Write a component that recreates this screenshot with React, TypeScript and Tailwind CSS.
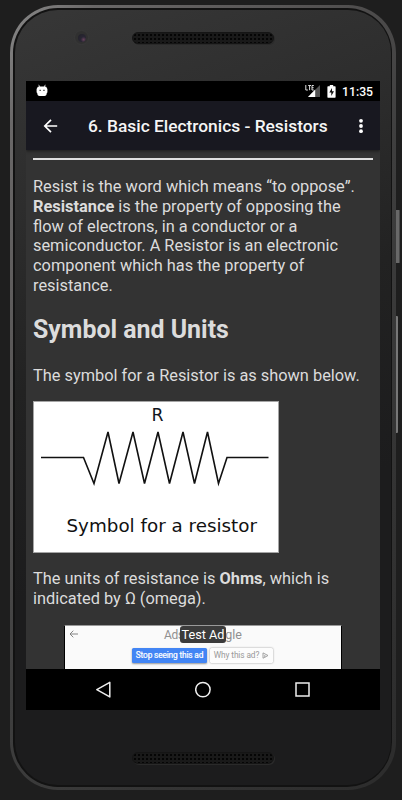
import React from 'react';

function Speaker() {
  return (
    <div className="w-[142px] h-[12px] rounded-full bg-[#191919] border border-[#151515] shadow-[1px_1px_0_#2a2a2a] bg-[radial-gradient(circle,#050505_1px,transparent_1.5px)] bg-[length:4px_4px]" />
  );
}

function StatusBar() {
  return (
    <div className="h-[20px] bg-black flex items-center pl-[10px] pr-[7px]">
      <svg width="12" height="13" viewBox="0 0 12 13" className="-mt-[1px]">
        <path d="M2.7 .8 3.8 3M9.3 .8 8.2 3" stroke="#bbb" strokeWidth="1" />
        <path d="M1.4 3.5Q1.5 2.4 3 2.4H9Q10.5 2.4 10.6 3.5L11.4 5V8.5L10.7 9V10Q10.4 12 8.5 12H3.5Q1.6 12 1.3 10V9L.6 8.5V5Z" fill="#fff" />
        <path d="M3.5 5.8h1.3v1.2H3.5zM7.3 5.8h1.3v1.2H7.3z" fill="#333" />
      </svg>
      <div className="ml-auto flex items-center">
        <svg width="16" height="14" viewBox="0 0 16 14">
          <path d="M15 1V13H3Z" fill="#545454" />
          <path d="M10.2 5.5V13H3Z" fill="#fff" />
          <path d="M.8 1V6H2.9M3.2 1.5H6M4.6 1.5V6.2M8.8 1.5H7V6H8.8M7 3.7H8.6" fill="none" stroke="#ddd" strokeWidth="1" />
        </svg>
        <svg width="9" height="13" viewBox="0 0 9 13" className="ml-[6px]">
          <path d="M2.8 0H6.2V1.2H8Q8.6 1.2 8.6 2V12Q8.6 12.8 8 12.8H1Q.4 12.8 .4 12V2Q.4 1.2 1 1.2H2.8Z" fill="#fff" />
          <path d="M5 3 2.3 7.5H4.3V11L7 6.2H5Z" fill="#111" />
        </svg>
        <span className="ml-[6px] pt-[1px] text-[12.2px] leading-[20px] font-medium text-white">11:35</span>
      </div>
    </div>
  );
}

function AppBar() {
  return (
    <header className="relative z-10 h-[49px] bg-[#181820] shadow-[0_1px_3px_rgba(0,0,0,0.5)] flex items-center pl-[17px] pr-[16px]">
      <svg width="16" height="16" viewBox="0 0 16 16" fill="none" stroke="#fff" strokeWidth="1.7">
        <path d="M14.2 8H2M8 1.8 1.8 8 8 14.2" />
      </svg>
      <h1 className="ml-[29px] pt-[1px] text-[17.35px] leading-[24px] font-medium text-[#f5f5f5] whitespace-nowrap">6. Basic Electronics - Resistors</h1>
      <svg width="6" height="18" viewBox="0 0 6 18" fill="#fff" className="ml-auto">
        <circle cx="3" cy="3.8" r="1.9" />
        <circle cx="3" cy="9" r="1.9" />
        <circle cx="3" cy="14.2" r="1.9" />
      </svg>
    </header>
  );
}

function ResistorFigure() {
  return (
    <svg width="246" height="152" viewBox="0 0 246 152" className="block mt-[15px]">
      <rect x=".5" y=".5" width="245" height="151" fill="#fff" stroke="#a5a5a5" />
      <path
        d="M8 56.5H50.5L61 82.5 75 31 86 82.5 100 31 111.5 82.5 125 31 136.5 82.5 150 31 161.5 82.5 174.5 31 185.5 82.5 194 56.5H235.5"
        fill="none"
        stroke="#111"
        strokeWidth="1.6"
      />
      <text x="118.5" y="20" fontSize="18" textLength="12" lengthAdjust="spacingAndGlyphs" fill="#101520" fontFamily="'DejaVu Sans', sans-serif">R</text>
      <text x="33.5" y="131" fontSize="18" textLength="190.5" lengthAdjust="spacingAndGlyphs" fill="#111" fontFamily="'DejaVu Sans', sans-serif">Symbol for a resistor</text>
    </svg>
  );
}

function AdBanner() {
  return (
    <div className="relative mt-[16px] ml-[31px] w-[278px] h-[50px] bg-[#fafafa] border border-black border-t-[#999]">
      <svg width="10" height="8" viewBox="0 0 10 8" fill="none" stroke="#777" strokeWidth=".9" className="absolute left-[4px] top-[4px]">
        <path d="M9 4H1M4.3 .7 1 4 4.3 7.3" />
      </svg>
      <div className="flex justify-center text-[12px] leading-[18px] text-[#909090]">
        <span className="w-[78px] flex justify-between">
          <span className="-tracking-[.3px]">Ads</span>
          <span className="text-[12.5px]">gle</span>
        </span>
      </div>
      <span className="absolute left-[115px] top-0 w-[46px] h-[17px] rounded-[3px] bg-[#3b3b3b] text-center text-[12.7px] leading-[18px] text-white whitespace-nowrap">Test Ad</span>
      <div className="flex gap-[3px] ml-[67px] mt-[4px] text-[8.3px] leading-[15px] whitespace-nowrap">
        <span className="w-[75px] h-[15px] rounded-[1.5px] bg-[#4285f4] flex items-center justify-center tracking-[-0.15px] text-white [-webkit-text-stroke:0.2px_white] shadow-[0_1px_2px_rgba(0,0,0,0.4)]">Stop seeing this ad</span>
        <span className="w-[63px] h-[15px] rounded-[1.5px] bg-[#fcfcfc] flex items-center justify-center gap-[3px] tracking-[-0.1px] text-[#999] shadow-[0_0_2px_rgba(0,0,0,0.45)]">
          Why this ad?
          <svg width="7" height="7" viewBox="0 0 7 7" fill="none" stroke="#999" strokeWidth=".9">
            <path d="M1 4.8V.9L6 3.5 2.8 5.3V3M1 4.8V6.2L2.8 5.3" />
          </svg>
        </span>
      </div>
    </div>
  );
}

function NavBar() {
  return (
    <div className="h-[41px] shrink-0 bg-black flex items-center pl-[69px]">
      <svg width="18" height="18" viewBox="0 0 18 18" fill="none" stroke="#eee" strokeWidth="1.5" strokeLinejoin="round">
        <path d="M14.8 1.3V15.9L1.8 8.6Z" />
      </svg>
      <svg width="18" height="18" viewBox="0 0 18 18" fill="none" stroke="#eee" strokeWidth="1.5" className="ml-[82px]">
        <circle cx="7.9" cy="8.6" r="7.2" />
      </svg>
      <svg width="18" height="18" viewBox="0 0 18 18" fill="none" stroke="#eee" strokeWidth="1.5" className="ml-[81px]">
        <rect x="2" y="2" width="13" height="13" />
      </svg>
    </div>
  );
}

function Article() {
  return (
    <main className="flex-1 min-h-0 overflow-hidden bg-[#333] px-[7px] text-[16.38px] leading-[19.8px] text-[#dcdcdc]">
      <div className="mt-[8px] h-[2px] bg-[#ddd]" />
      <p className="mt-[17px] whitespace-nowrap">
        Resist is the word which means “to oppose”.<br />
        <b>Resistance</b> is the property of opposing the<br />
        flow of electrons, in a conductor or a<br />
        semiconductor. A Resistor is an electronic<br />
        component which has the property of<br />
        resistance.
      </p>
      <h2 className="mt-[19.5px] text-[24.9px] leading-[30px] font-bold whitespace-nowrap">Symbol and Units</h2>
      <p className="mt-[21px] whitespace-nowrap">The symbol for a Resistor is as shown below.</p>
      <ResistorFigure />
      <p className="mt-[16px] whitespace-nowrap">
        The units of resistance is <b>Ohms</b>, which is<br />
        indicated by Ω (omega).
      </p>
      <AdBanner />
    </main>
  );
}

export default function App() {
  return (
    <div className="relative w-[402px] h-[800px] overflow-hidden bg-[#1e1e1e] pl-[10px] pt-[5px] font-['Roboto',sans-serif]">
      <div className="absolute left-[395px] top-[210px] w-[5px] h-[53px] rounded-r-[1px] bg-[#686868] border-r border-[#484848]" />
      <div className="absolute left-[395px] top-[316px] w-[3px] h-[117px] rounded-r-[1px] bg-[#777]" />

      <div className="relative w-[386px] h-[785px] rounded-[48px] py-[3px] pl-[3px] pr-[4px] bg-[linear-gradient(125deg,#8a8a8a_0%,#6a6868_9%,#575555_30%,#3e3e3e_52%,#343434_75%,#2c2c2c_100%)]">
        <div className="h-full rounded-[45px] bg-[#121212] p-[2px] pr-[1px]">
          <div className="h-full rounded-[43px] bg-[linear-gradient(160deg,#373737_0%,#2d2d2d_22%,#222_42%,#1c1c1d_65%,#1c1c1d_100%)] flex flex-col items-center">
            <div className="relative w-full h-[71px] shrink-0 flex justify-center pt-[22px]">
              <div className="absolute left-[59px] top-[20px] w-[15px] h-[15px] rounded-full bg-[#303030] border border-[#393939] flex items-center justify-center">
                <div className="w-[8px] h-[8px] rounded-full bg-[radial-gradient(circle_at_70%_70%,#68425c_0%,#292634_35%,#202025_100%)]" />
              </div>
              <Speaker />
            </div>
            <div className="w-[354px] h-[629px] shrink-0 bg-[#333] flex flex-col overflow-hidden">
              <StatusBar />
              <AppBar />
              <Article />
              <NavBar />
            </div>
            <div className="mt-[42px]">
              <Speaker />
            </div>
          </div>
        </div>
      </div>
    </div>
  );
}
